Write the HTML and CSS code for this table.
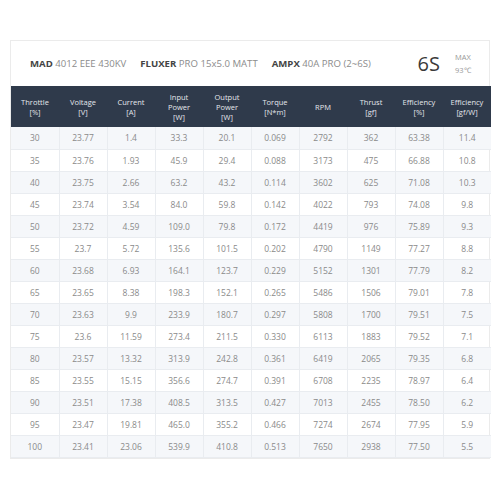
FILE: index.html
```html
<!DOCTYPE html>
<html>
<head>
  <link rel="stylesheet" href="styles.css">
</head>
<body>
  <div class="card">
    <div class="title-row">
      <div class="parts">
        <span class="part"><b>MAD</b> 4012 EEE 430KV</span>
        <span class="part"><b>FLUXER</b> PRO 15x5.0 MATT</span>
        <span class="part"><b>AMPX</b> 40A PRO (2~6S)</span>
      </div>
      <div class="cells">6S</div>
      <div class="max">MAX<br>93℃</div>
    </div>

    <table class="data">
      <thead>
        <tr>
          <th>Throttle<br>[%]</th>
          <th>Voltage<br>[V]</th>
          <th>Current<br>[A]</th>
          <th>Input<br>Power<br>[W]</th>
          <th>Output<br>Power<br>[W]</th>
          <th>Torque<br>[N*m]</th>
          <th>RPM</th>
          <th>Thrust<br>[gf]</th>
          <th>Efficiency<br>[%]</th>
          <th>Efficiency<br>[gf/W]</th>
        </tr>
      </thead>
      <tbody>
        <tr><td>30</td><td>23.77</td><td>1.4</td><td>33.3</td><td>20.1</td><td>0.069</td><td>2792</td><td>362</td><td>63.38</td><td>11.4</td></tr>
        <tr><td>35</td><td>23.76</td><td>1.93</td><td>45.9</td><td>29.4</td><td>0.088</td><td>3173</td><td>475</td><td>66.88</td><td>10.8</td></tr>
        <tr><td>40</td><td>23.75</td><td>2.66</td><td>63.2</td><td>43.2</td><td>0.114</td><td>3602</td><td>625</td><td>71.08</td><td>10.3</td></tr>
        <tr><td>45</td><td>23.74</td><td>3.54</td><td>84.0</td><td>59.8</td><td>0.142</td><td>4022</td><td>793</td><td>74.08</td><td>9.8</td></tr>
        <tr><td>50</td><td>23.72</td><td>4.59</td><td>109.0</td><td>79.8</td><td>0.172</td><td>4419</td><td>976</td><td>75.89</td><td>9.3</td></tr>
        <tr><td>55</td><td>23.7</td><td>5.72</td><td>135.6</td><td>101.5</td><td>0.202</td><td>4790</td><td>1149</td><td>77.27</td><td>8.8</td></tr>
        <tr><td>60</td><td>23.68</td><td>6.93</td><td>164.1</td><td>123.7</td><td>0.229</td><td>5152</td><td>1301</td><td>77.79</td><td>8.2</td></tr>
        <tr><td>65</td><td>23.65</td><td>8.38</td><td>198.3</td><td>152.1</td><td>0.265</td><td>5486</td><td>1506</td><td>79.01</td><td>7.8</td></tr>
        <tr><td>70</td><td>23.63</td><td>9.9</td><td>233.9</td><td>180.7</td><td>0.297</td><td>5808</td><td>1700</td><td>79.51</td><td>7.5</td></tr>
        <tr><td>75</td><td>23.6</td><td>11.59</td><td>273.4</td><td>211.5</td><td>0.330</td><td>6113</td><td>1883</td><td>79.52</td><td>7.1</td></tr>
        <tr><td>80</td><td>23.57</td><td>13.32</td><td>313.9</td><td>242.8</td><td>0.361</td><td>6419</td><td>2065</td><td>79.35</td><td>6.8</td></tr>
        <tr><td>85</td><td>23.55</td><td>15.15</td><td>356.6</td><td>274.7</td><td>0.391</td><td>6708</td><td>2235</td><td>78.97</td><td>6.4</td></tr>
        <tr><td>90</td><td>23.51</td><td>17.38</td><td>408.5</td><td>313.5</td><td>0.427</td><td>7013</td><td>2455</td><td>78.50</td><td>6.2</td></tr>
        <tr><td>95</td><td>23.47</td><td>19.81</td><td>465.0</td><td>355.2</td><td>0.466</td><td>7274</td><td>2674</td><td>77.95</td><td>5.9</td></tr>
        <tr><td>100</td><td>23.41</td><td>23.06</td><td>539.9</td><td>410.8</td><td>0.513</td><td>7650</td><td>2938</td><td>77.50</td><td>5.5</td></tr>
      </tbody>
    </table>
  </div>
</body>
</html>
```

FILE: styles.css
```css
:root {
  --head: #2f3a4b;
  --line: #e9ecf0;
  --stripe: #f5f7fa;
  --text: #8a8a8a;
}

* {
  margin: 0;
  padding: 0;
  box-sizing: border-box;
}

body {
  background: #fff;
  font-family: 'Open Sans', sans-serif;
  padding: 40px 10px 0;
}

.card {
  width: 480px;
  border: 1px solid #ebebeb;
  background: #fff;
}

.title-row {
  height: 45px;
  display: flex;
  align-items: center;
  padding-left: 19px;
  color: #8c8c8c;
}

.parts {
  display: flex;
  gap: 14px;
  font-size: 9.6px;
  flex-grow: 1;
}

.part b {
  color: #444;
  font-weight: 700;
}

.cells {
  font-size: 20px;
  color: #3a3a3a;
  margin-right: 15px;
}

.max {
  font-size: 7.5px;
  line-height: 13px;
  color: #999;
  width: 34px;
}

.data {
  width: 480px;
  border-collapse: collapse;
  table-layout: fixed;
}

.data th {
  background: var(--head);
  color: #e4e7ec;
  font-size: 7.5px;
  font-weight: 400;
  line-height: 10px;
  height: 41px;
  width: 48px;
  text-align: center;
}

.data td {
  height: 22px;
  font-size: 8.5px;
  color: var(--text);
  text-align: center;
  border-right: 1px solid var(--line);
  border-bottom: 1px solid var(--line);
}

.data td:last-child {
  border-right: none;
}

.data tbody tr:nth-child(odd) td {
  background: var(--stripe);
}
```
